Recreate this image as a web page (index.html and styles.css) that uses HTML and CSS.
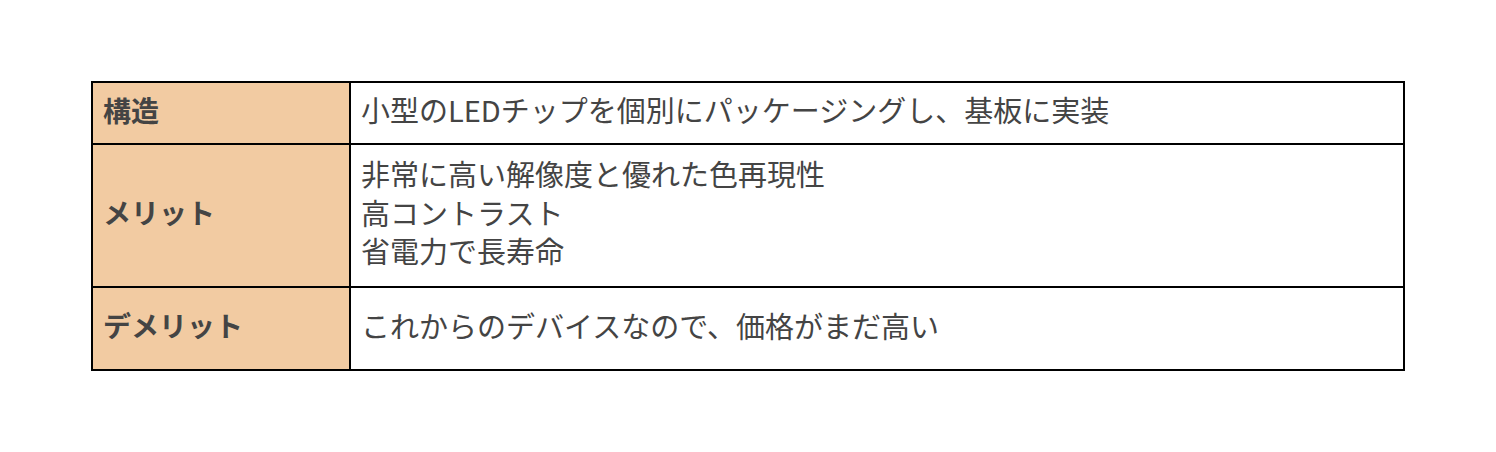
FILE: index.html
```html
<!DOCTYPE html>
<html lang="ja">
<head>
<meta charset="utf-8">
<link rel="stylesheet" href="styles.css">
</head>
<body>
<table class="spec">
  <tr class="r1">
    <th>構造</th>
    <td>小型のLEDチップを個別にパッケージングし、基板に実装</td>
  </tr>
  <tr class="r2">
    <th>メリット</th>
    <td>非常に高い解像度と優れた色再現性<br>高コントラスト<br>省電力で長寿命</td>
  </tr>
  <tr class="r3">
    <th>デメリット</th>
    <td>これからのデバイスなので、価格がまだ高い</td>
  </tr>
</table>
</body>
</html>
```

FILE: styles.css
```css
html, body {
  margin: 0;
  padding: 0;
  background: #fff;
}
body {
  font-family: "Noto Sans CJK JP", "Noto Sans", sans-serif;
  color: #444;
}
.spec {
  margin: 81px 0 0 91px;
  border-collapse: separate;
  border-spacing: 0;
  border-top: 2px solid #000;
  border-left: 2px solid #000;
  width: 1314px;
}
.spec th, .spec td {
  border-right: 2px solid #000;
  border-bottom: 2px solid #000;
  padding: 0 10px 7px;
  vertical-align: middle;
  text-align: left;
}
.spec th {
  width: 236px;
  background: #f2cba2;
  font-weight: 700;
  font-size: 28px;
}
.spec td {
  font-size: 29px;
  line-height: 38.5px;
}
.r1 { height: 62px; }
.r2 { height: 143px; }
.r3 { height: 83px; }
```
